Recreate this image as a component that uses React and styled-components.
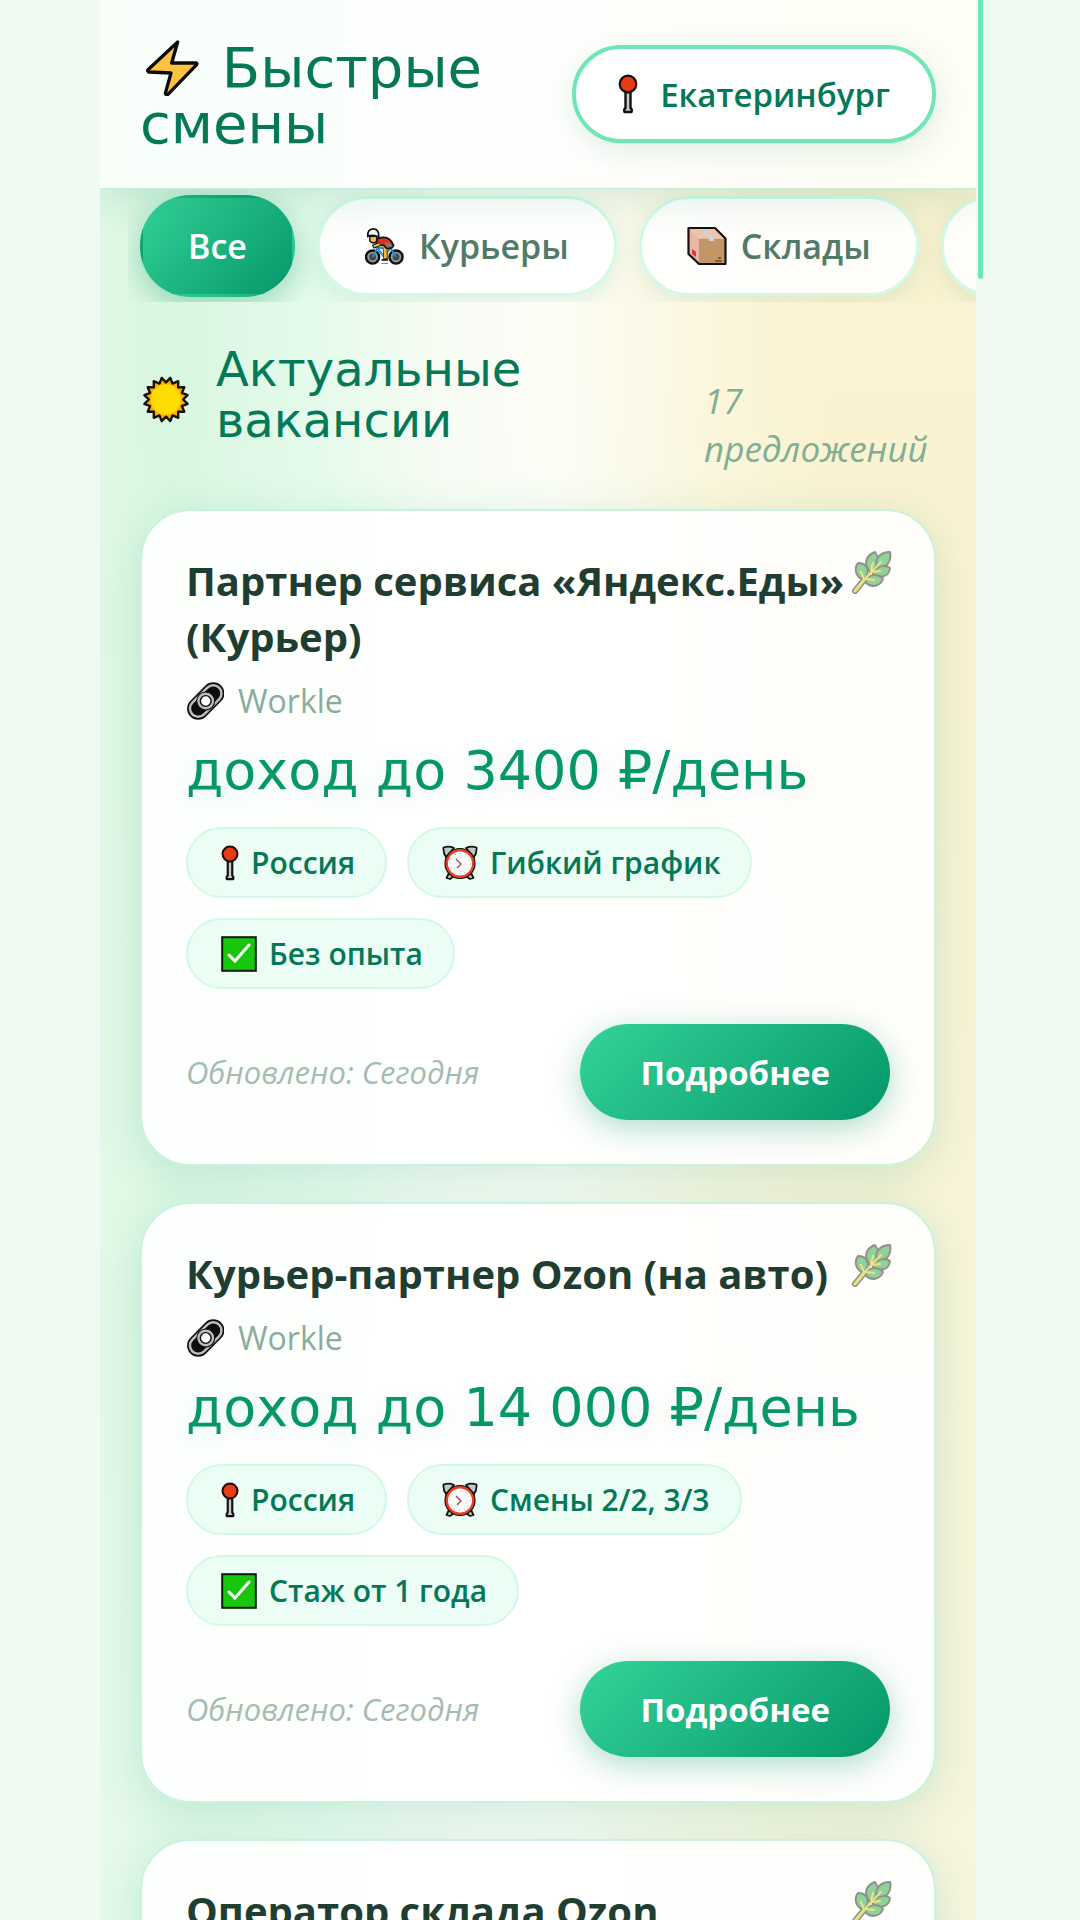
import React from "react";
import styled, { createGlobalStyle, css } from "styled-components";

const GlobalStyle = createGlobalStyle`
  * {
    box-sizing: border-box;
  }
  body {
    margin: 0;
    background: #eefaf2;
    color: #1f3d31;
    font-family: "Open Sans", "Noto Sans", sans-serif;
  }
  h1, h2, h3, p {
    margin: 0;
  }
  button {
    font-family: inherit;
    cursor: pointer;
  }
`;

const Page = styled.div`
  display: flex;
  height: 100vh;
  overflow: hidden;
  padding: 0 96px 0 100px;
`;

const Column = styled.main`
  flex: 1;
  min-width: 0;
  overflow: hidden;
  background: linear-gradient(
      180deg,
      rgba(240, 252, 243, 0) 20%,
      rgba(240, 252, 243, 0.4) 100%
    ),
    linear-gradient(
      90deg,
      #e0f8e4 0%,
      #d9f7e0 8%,
      #e6fbec 26%,
      #f8fcf4 40%,
      #fcfdf6 52%,
      #fbf6dc 70%,
      #faf2d0 84%,
      #faf2d0 100%
    );
`;

const ScrollTrack = styled.div`
  width: 8px;
  padding-left: 2px;
`;

const ScrollThumb = styled.div`
  width: 5px;
  height: 15%;
  max-height: 279px;
  border-radius: 0 0 3px 3px;
  background: #6ee7b7;
`;

const Header = styled.header`
  position: relative;
  z-index: 2;
  display: flex;
  align-items: center;
  justify-content: space-between;
  gap: 24px;
  padding: 36px 40px;
  background: rgba(255, 255, 255, 0.8);
  border-bottom: 1px solid #c3ecd9;
  box-shadow: 0 8px 40px rgba(16, 130, 100, 0.16);
`;

const Logo = styled.h1`
  padding-top: 4px;
  font-family: "DejaVu Sans", sans-serif;
  font-size: 56px;
  font-weight: 400;
  line-height: 56px;
  color: #047857;
  svg {
    width: 64px;
    height: 56px;
    vertical-align: -9px;
  }
`;

const CityButton = styled.button`
  flex: none;
  display: flex;
  align-items: center;
  gap: 22px;
  height: 98px;
  padding: 0 42px;
  border: 4px solid #6ee7b7;
  border-radius: 50px;
  background: #fff;
  color: #047857;
  font-size: 33px;
  font-weight: 600;
  box-shadow: 0 8px 30px rgba(16, 130, 100, 0.12);
  svg {
    width: 20px;
    height: 40px;
  }
`;

const Filters = styled.nav`
  display: flex;
  align-items: center;
  gap: 22px;
  height: 113px;
  margin-left: 28px;
  padding: 0 12px;
  overflow: hidden;
`;

const Filter = styled.button`
  flex: none;
  display: flex;
  align-items: center;
  justify-content: center;
  gap: 14px;
  height: 100px;
  min-width: 154px;
  padding: 0 45px;
  border: 3px solid #d1fae5;
  border-radius: 50px;
  background: rgba(255, 255, 255, 0.9);
  color: #527a68;
  font-size: 34px;
  font-weight: 600;
  box-shadow: 0 6px 24px rgba(16, 150, 110, 0.12);
  svg {
    width: 40px;
    height: 40px;
  }
  ${(props) =>
    props.$active &&
    css`
      height: 102px;
      border-color: transparent;
      background: linear-gradient(135deg, #34d399, #059669);
      color: #fff;
      box-shadow: 0 8px 30px rgba(5, 150, 105, 0.35);
    `}
`;

const SectionHead = styled.div`
  display: flex;
  align-items: flex-start;
  gap: 16px;
  padding: 42px 40px 36px;
`;

const SectionTitle = styled.h2`
  flex: 1;
  display: flex;
  align-items: center;
  gap: 24px;
  font-family: "DejaVu Sans", sans-serif;
  font-size: 48px;
  font-weight: 400;
  line-height: 51px;
  color: #047857;
  svg {
    flex: none;
    width: 52px;
    height: 47px;
    margin-top: 8px;
  }
`;

const Count = styled.p`
  flex: 0 0 232px;
  margin-top: 33px;
  font-size: 35px;
  font-style: italic;
  line-height: 48px;
  color: #7fae95;
`;

const List = styled.div`
  display: flex;
  flex-direction: column;
  gap: 36px;
  padding: 0 40px;
`;

const Card = styled.article`
  position: relative;
  padding: 42px 44px 44px;
  border: 2px solid #c9f2df;
  border-radius: 50px;
  background: rgba(255, 255, 255, 0.9);
  background-clip: padding-box;
  box-shadow: 0 10px 44px rgba(16, 150, 110, 0.17);
`;

const CardLeaf = styled.div`
  position: absolute;
  top: 40px;
  right: 42px;
  opacity: 0.5;
  svg {
    display: block;
    width: 40px;
    height: 43px;
  }
`;

const CardTitle = styled.h3`
  font-size: 40px;
  font-weight: 700;
  line-height: 56px;
  color: #1f3d31;
`;

const Company = styled.p`
  display: flex;
  align-items: center;
  gap: 14px;
  margin-top: 12px;
  font-size: 32px;
  line-height: 48px;
  color: #8aac9b;
  svg {
    width: 38px;
    height: 38px;
  }
`;

const Salary = styled.p`
  margin-top: 14px;
  font-family: "DejaVu Sans", sans-serif;
  font-size: 54px;
  line-height: 64px;
  color: #059669;
  text-shadow: 0 4px 20px rgba(16, 150, 110, 0.12);
`;

const Tags = styled.div`
  display: flex;
  flex-wrap: wrap;
  gap: 20px;
  margin-top: 24px;
`;

const Tag = styled.span`
  display: flex;
  align-items: center;
  gap: 12px;
  height: 71px;
  padding: 0 30px 0 33px;
  border: 2px solid #d1fae5;
  border-radius: 36px;
  background: #ebfdf5;
  color: #047857;
  font-size: 30px;
  font-weight: 600;
  svg {
    width: auto;
    height: 36px;
  }
`;

const CardFooter = styled.div`
  display: flex;
  align-items: center;
  justify-content: space-between;
  margin-top: 35px;
`;

const Updated = styled.span`
  font-size: 31px;
  font-style: italic;
  color: #a5bcb0;
`;

const MoreButton = styled.button`
  height: 96px;
  padding: 0 60px;
  border: none;
  border-radius: 48px;
  background: linear-gradient(135deg, #34d399, #059669);
  color: #fff;
  font-size: 33px;
  font-weight: 700;
  box-shadow: 0 8px 32px rgba(5, 150, 105, 0.32);
`;

const BoltIcon = () => (
  <svg viewBox="150 123 192 168" aria-hidden="true">
    <path
      d="M263 129 L245 192 L319 192 Q322 193 320 197 L234 286 Q228 288 226 283 L243 222 L176 219 Q171 216 174 212 Z"
      fill="#fcc340"
      stroke="#0b0b0b"
      strokeWidth="10"
      strokeLinejoin="round"
    />
  </svg>
);

const PinIcon = () => (
  <svg viewBox="0 0 20 40" aria-hidden="true">
    <path
      d="M7.5 18 V34 Q5.500 35.500 6.500 38 H13.500 Q14.500 35.500 12.500 34 V18 Z"
      fill="#c9c9c9"
      stroke="#111"
      strokeWidth="2.400"
      strokeLinejoin="round"
    />
    <circle cx="10" cy="10" r="8.300" fill="#ea3a16" stroke="#1a0d0a" strokeWidth="2.200" />
  </svg>
);

const BikeIcon = () => (
  <svg viewBox="20 48 116 116" aria-hidden="true">
    <circle cx="42" cy="138" r="19" fill="#999" stroke="#111" strokeWidth="7" />
    <circle cx="110" cy="138" r="19" fill="#999" stroke="#111" strokeWidth="7" />
    <circle cx="42" cy="138" r="10" fill="#444" />
    <circle cx="110" cy="138" r="10" fill="#444" />
    <path
      d="M42 138 L56 112 L94 112 L110 138 M56 112 L74 136 L94 112"
      fill="none"
      stroke="#1a8fd0"
      strokeWidth="6"
      strokeLinejoin="round"
    />
    <path d="M78 112 L80 150 H68" fill="none" stroke="#111" strokeWidth="13" />
    <path d="M78 106 L79 142" fill="none" stroke="#f5b93c" strokeWidth="9" />
    <path d="M66 152 H84" stroke="#fff" strokeWidth="7" strokeLinecap="round" />
    <path
      d="M58 84 Q90 72 103 104 Q98 116 82 112 L74 104 L54 104 Q50 92 58 84 Z"
      fill="#e0321c"
      stroke="#111"
      strokeWidth="5"
      strokeLinejoin="round"
    />
    <path d="M76 96 Q94 94 100 108 L84 110 Z" fill="#7a7a7a" />
    <path d="M62 96 L42 104 L46 112 L62 106" fill="#f5b93c" stroke="#111" strokeWidth="3" />
    <path d="M34 78 V92 Q44 102 54 92 V78 Z" fill="#f5b93c" stroke="#111" strokeWidth="4" />
    <path
      d="M28 78 Q26 58 44 56 Q62 58 60 80 Q44 72 28 78 Z"
      fill="#f4f6f6"
      stroke="#111"
      strokeWidth="5"
    />
  </svg>
);

const BoxIcon = () => (
  <svg viewBox="0 0 40 40" aria-hidden="true">
    <path d="M1.500 2 L12 12.500 V38 L1.500 28 Z" fill="#e6b9a0" />
    <path d="M1.500 2 H28 L38.500 12.500 H12 Z" fill="#ecc7ae" />
    <path d="M12 12.500 H38.500 V38 H12 Z" fill="#c3966a" />
    <path d="M13 2 H18 L27 12.500 V15 H22 V12.500 Z" fill="#d3d3d3" />
    <path d="M5 23 L9 26 V31 L5 28 Z" fill="#ef2b45" />
    <path d="M28 35 H35 M31 32 H34" stroke="#3a2a1c" strokeWidth="1.200" />
    <path
      d="M1.500 2 H28 L38.500 12.500 V38 H12 L1.500 28 Z"
      fill="none"
      stroke="#15110e"
      strokeWidth="2.200"
      strokeLinejoin="round"
    />
  </svg>
);

const sunPoints = Array.from({ length: 32 }, (_, i) => {
  const r = i % 2 ? 17.5 : 22.5;
  const a = (Math.PI * (i + 1)) / 16;
  return `${(24 + r * Math.cos(a)).toFixed(1)},${(24 + r * Math.sin(a)).toFixed(1)}`;
}).join(" ");

const SunIcon = () => (
  <svg viewBox="0 0 48 48" aria-hidden="true">
    <polygon
      points={sunPoints}
      fill="#ffab00"
      stroke="#14100a"
      strokeWidth="2.400"
      strokeLinejoin="round"
    />
    <circle cx="24" cy="24" r="15.500" fill="#ffdc00" />
  </svg>
);

const LinkIcon = () => (
  <svg viewBox="-2 0 106 106" aria-hidden="true">
    <g fill="none" strokeLinecap="round">
      <path d="M32 74 L74 32" stroke="#0c0c0c" strokeWidth="62" />
      <path d="M32 74 L74 32" stroke="#bdbdbd" strokeWidth="53" />
      <path d="M32 74 L74 32" stroke="#0c0c0c" strokeWidth="39" />
    </g>
    <circle cx="53" cy="53" r="25" fill="#bdbdbd" stroke="#0c0c0c" strokeWidth="3" />
    <circle cx="53" cy="53" r="15" fill="#fdfffd" stroke="#0c0c0c" strokeWidth="4" />
  </svg>
);

const ClockIcon = () => (
  <svg viewBox="0 0 36 36" aria-hidden="true">
    <g stroke="#15110e" strokeWidth="1.800" strokeLinejoin="round">
      <path d="M1.500 2.500 Q7 0.500 12 3 L4 12 Q1 8 1.500 2.500 Z" fill="#c6c6cc" />
      <path d="M34.500 2.500 Q29 0.500 24 3 L32 12 Q35 8 34.500 2.500 Z" fill="#c6c6cc" />
      <path d="M7 28 L4.500 33 L8 34 L12 31 Z M29 28 L31.500 33 L28 34 L24 31 Z" fill="#c6c6cc" />
    </g>
    <circle cx="18" cy="18.500" r="15" fill="#e6401f" stroke="#15110e" strokeWidth="1.200" />
    <circle cx="18" cy="18.500" r="12" fill="#fbfbfb" />
    <circle
      cx="18"
      cy="18.500"
      r="10"
      fill="none"
      stroke="#a9a9b5"
      strokeWidth="1"
      strokeDasharray="1 4.236"
    />
    <path d="M14 14 L19 19 L15 23" fill="none" stroke="#a2445a" strokeWidth="1.300" />
  </svg>
);

const CheckIcon = () => (
  <svg viewBox="0 0 36 36" aria-hidden="true">
    <rect x="1.200" y="1.200" width="33.600" height="33.600" fill="#18c60c" stroke="#0d1a0c" strokeWidth="2" />
    <path d="M8 19 L14 25 L28 9" fill="none" stroke="#fff" strokeWidth="3" strokeLinecap="round" />
  </svg>
);

const LeafIcon = () => (
  <svg viewBox="0 0 40 43" aria-hidden="true">
    <g fill="#23a83a" stroke="#26261c" strokeWidth="2" strokeLinejoin="round">
      <path d="M12 29 C3 26 2 17 6 12 C15 12 18 19 14 27 Z" />
      <path d="M18 21 C11 13 14 4 23 1 C28 8 27 15 19 21 Z" />
      <path d="M25 16 C22 7 29 1 38 1 C40 10 35 17 26 17 Z" />
      <path d="M21 22 C25 14 34 14 38 17 C37 26 28 28 21 23 Z" />
      <path d="M13 30 C17 22 27 23 31 28 C28 36 19 37 13 31 Z" />
    </g>
    <path d="M3 40 L12 29" fill="none" stroke="#26261c" strokeWidth="6" strokeLinecap="round" />
    <g fill="none" stroke="#d8cc10" strokeLinecap="round">
      <path d="M3 40 L12 29" strokeWidth="3" />
      <path d="M11 30 L29 11 M12 28 L9 21 M19 20 L21 12 M20 21 L28 20 M14 28 L22 29" strokeWidth="2" />
    </g>
  </svg>
);

const filters = [
  { label: "Все", active: true },
  { label: "Курьеры", icon: <BikeIcon /> },
  { label: "Склады", icon: <BoxIcon /> },
  { label: "" },
];

const jobs = [
  {
    title: "Партнер сервиса «Яндекс.Еды» (Курьер)",
    company: "Workle",
    salary: "доход до 3400 ₽/день",
    place: "Россия",
    schedule: "Гибкий график",
    experience: "Без опыта",
    updated: "Сегодня",
  },
  {
    title: "Курьер-партнер Ozon (на авто)",
    company: "Workle",
    salary: "доход до 14 000 ₽/день",
    place: "Россия",
    schedule: "Смены 2/2, 3/3",
    experience: "Стаж от 1 года",
    updated: "Сегодня",
  },
  { title: "Оператор склада Ozon" },
];

const JobCard = ({ job }) => (
  <Card>
    <CardLeaf>
      <LeafIcon />
    </CardLeaf>
    <CardTitle>{job.title}</CardTitle>
    {job.company && (
      <>
        <Company>
          <LinkIcon />
          {job.company}
        </Company>
        <Salary>{job.salary}</Salary>
        <Tags>
          <Tag>
            <PinIcon />
            {job.place}
          </Tag>
          <Tag>
            <ClockIcon />
            {job.schedule}
          </Tag>
          <Tag>
            <CheckIcon />
            {job.experience}
          </Tag>
        </Tags>
        <CardFooter>
          <Updated>Обновлено: {job.updated}</Updated>
          <MoreButton type="button">Подробнее</MoreButton>
        </CardFooter>
      </>
    )}
  </Card>
);

const App = () => (
  <>
    <GlobalStyle />
    <Page>
      <Column>
        <Header>
          <Logo>
            <BoltIcon /> Быстрые смены
          </Logo>
          <CityButton type="button">
            <PinIcon />
            Екатеринбург
          </CityButton>
        </Header>
        <Filters>
          {filters.map(({ label, icon, active }) => (
            <Filter key={label} type="button" $active={active}>
              {icon}
              {label}
            </Filter>
          ))}
        </Filters>
        <SectionHead>
          <SectionTitle>
            <SunIcon />
            Актуальные вакансии
          </SectionTitle>
          <Count>17 предложений</Count>
        </SectionHead>
        <List>
          {jobs.map((job) => (
            <JobCard key={job.title} job={job} />
          ))}
        </List>
      </Column>
      <ScrollTrack>
        <ScrollThumb />
      </ScrollTrack>
    </Page>
  </>
);

export default App;
